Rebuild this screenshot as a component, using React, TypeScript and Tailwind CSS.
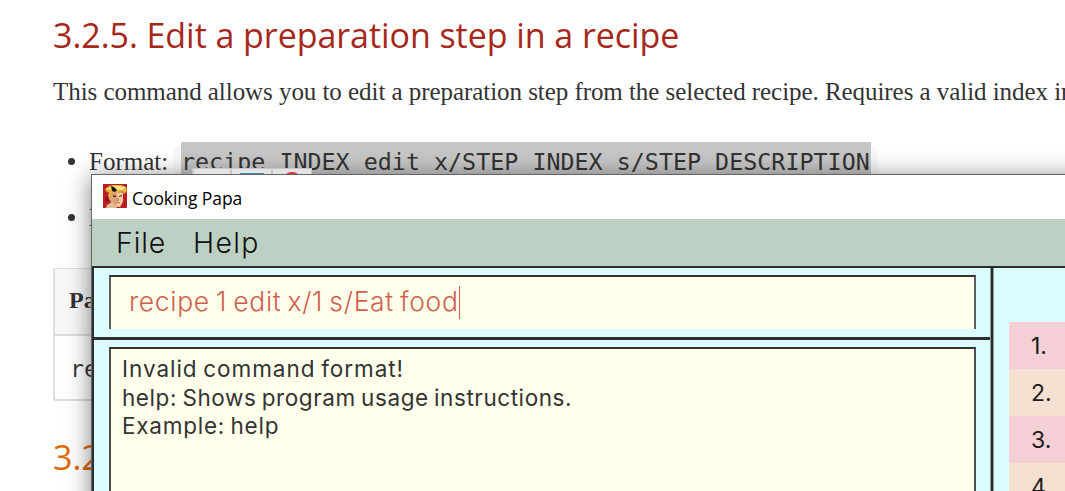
import React from "react";

function PapaIcon() {
  return (
    <svg width="24" height="24" viewBox="0 0 24 24" className="shrink-0">
      <rect width="24" height="24" fill="#bd1e25" />
      <path d="M2 14L5 12L7 17L3 17Z" fill="#8d1219" />
      <path d="M7 8L10 6L17 6L20 9L20 17L17 23L12 23L8 18L6 15L5 11Z" fill="#dfa377" />
      <path d="M14 9L20 9L20 17L17 23L13 22L15 16Z" fill="#f3cda0" />
      <path d="M2 5L6 2L10 1L18 1L23 3L24 7L21 10L19 7L10 8L8 13L6 12L6 9L3 7Z" fill="#e3b23b" />
      <path d="M3 5L9 2L18 2L23 4L19 6L11 6Z" fill="#f8e27c" />
      <path d="M8 2L11 3L14 6L12 8L9 7Z" fill="#1c120d" />
      <path d="M10 12L13 12.5M16 12.5L19 11.5" stroke="#5c2a1a" strokeWidth="1.3" fill="none" />
      <path d="M15 14L15.5 16.5L14 16.5M13 19L17 18.5" stroke="#a8613f" strokeWidth="0.8" fill="none" />
      <path d="M4 21L9 18L14 24L3 24Z" fill="#dcc09c" />
    </svg>
  );
}

function Document() {
  return (
    <article className="w-[1200px] pl-[53px] text-[#333] font-['Liberation_Serif',serif]">
      <h3 className="pt-[11px] h-[70px] font-['Open_Sans',sans-serif] text-[34px] leading-[48px] tracking-[-0.06px] text-[#a5281b] whitespace-nowrap">
        3.2.5. Edit a preparation step in a recipe
      </h3>
      <p className="h-[72px] pt-[6px] text-[25px] leading-[32px] tracking-[-0.055px] whitespace-nowrap">
        This command allows you to edit a preparation step from the selected recipe. Requires a valid index in the list.
      </p>
      <ul className="h-[126px] text-[25px]">
        <li className="flex h-[56px] items-start whitespace-nowrap">
          <span className="mt-[16px] ml-[15px] mr-[14px] h-[7px] w-[7px] rounded-full bg-[#333]" />
          <span className="leading-[39px] w-[85px]">Format:</span>
          <code className="flex rounded-md bg-[#f7f7f8] px-[7px] mt-[4px] font-['DejaVu_Sans_Mono',monospace] text-[23.3px] leading-[35px]">
            <span className="-mt-[4px] h-[39px] w-[690px] bg-[#c6c6c6] leading-[39px] tracking-[0.03px]">
              recipe INDEX edit x/STEP_INDEX s/STEP_DESCRIPTION
            </span>
          </code>
        </li>
        <li className="flex h-[56px] items-start">
          <span className="mt-[16px] ml-[15px] mr-[14px] h-[7px] w-[7px] rounded-full bg-[#333]" />
          <span className="leading-[39px]">Example:</span>
        </li>
      </ul>
      <div className="h-[133px] w-[900px] border-2 border-t border-[#dedede] text-[24px]">
        <div className="h-[67px] border-b-2 border-[#dedede] bg-[#f7f8f7] pl-[14px] font-bold leading-[63px]">Parameter</div>
        <div className="h-[63px] pl-[15px] font-['DejaVu_Sans_Mono',monospace] text-[23.3px] leading-[65px] text-black/80">recipe</div>
      </div>
      <h3 className="pt-[32px] font-['Open_Sans',sans-serif] text-[34px] leading-[48px] text-[#e0690c]">3.2.6.</h3>
    </article>
  );
}

const rows = [
  { n: "1.", cls: "bg-[#f4d0d6]" },
  { n: "2.", cls: "bg-[#f6e0d2]" },
  { n: "3.", cls: "bg-[#f4d0d6]" },
  { n: "4.", cls: "bg-[#f6e0d2]" },
];

function AppWindow() {
  return (
    <section className="absolute left-[91px] top-[174px] flex h-[400px] w-[1100px] flex-col border border-[#666] bg-white font-['Inter',sans-serif] shadow-[0_3px_22px_rgba(0,0,0,0.5)]">
      <header className="flex h-[44px] shrink-0 items-center pl-[11px] pb-[2px]">
        <PapaIcon />
        <span className="ml-[5px] mt-[4px] font-['Open_Sans',sans-serif] text-[17.5px] tracking-[-0.08px] text-black">Cooking Papa</span>
      </header>
      <nav className="flex h-[47px] shrink-0 bg-[#bcd0c4] pl-[24px] text-[28.5px] font-light leading-[47px] tracking-[1.3px] text-[#111]">
        <span className="w-[77px] tracking-[0.9px]">File</span>
        <span>Help</span>
      </nav>
      <main className="flex grow border-l-2 border-t-2 border-[#2b2f2f] bg-[#dcfcff]">
        <div className="flex w-[896px] flex-col">
          <div className="h-[69px] pl-[15px] pt-[7px]">
            <div className="flex h-[54px] w-[867px] items-center border-x-2 border-t-2 border-x-[#5a5f5d] border-t-[#333] bg-[#ffffec] pl-[18px] pb-[2px]">
              <span className="whitespace-nowrap text-[26.5px] font-light tracking-[0.68px] [word-spacing:-2px] text-[#d0604e]">recipe 1 edit x/1 s/Eat food</span>
              <span className="h-[33px] w-[1px] bg-[#d0604e]" />
            </div>
          </div>
          <div className="grow border-t-[3px] border-[#2b2f2f] pl-[15px] pt-[7px]">
            <div className="h-[200px] w-[867px] border-x-2 border-t-2 border-x-[#4a4f4d] border-t-[#333] bg-[#ffffec] pl-[11px] pt-[6px] text-[22.5px] leading-[28.5px] tracking-[0.57px] [word-spacing:-1.5px] text-[#333]">
              <p className="tracking-[0.95px]">Invalid command format!</p>
              <p>help: Shows program usage instructions.</p>
              <p className="tracking-[0.75px]">Example: help</p>
            </div>
          </div>
        </div>
        <div className="w-[4px] border-x border-[#8a9a9b] bg-[#2b2f2f]" />
        <div className="grow pl-[15px] pt-[54px]">
          {rows.map((r) => (
            <div key={r.n} className={`h-[47px] pl-[22px] text-[23px] leading-[49px] text-[#1b1b1b] ${r.cls}`}>
              {r.n}
            </div>
          ))}
        </div>
      </main>
    </section>
  );
}

export default function App() {
  return (
    <div className="relative h-[491px] w-[1065px] overflow-hidden bg-white">
      <Document />
      <AppWindow />
      <div className="absolute left-[192px] top-[168px] flex h-[6px] w-[120px] gap-[2px] overflow-hidden bg-[#c8c8c8] px-[2px] pt-[1px]">
        <i className="h-[8px] w-[36px] shrink-0 bg-[#e4e4e4]" />
        <i className="flex h-[8px] w-[39px] shrink-0 justify-center bg-[#e4e4e4] pt-[4px]"><b className="h-[4px] w-[24px] bg-[#3a88b8]" /></i>
        <i className="flex h-[8px] w-[38px] shrink-0 justify-center bg-[#e4e4e4] pt-[3px]"><b className="h-[20px] w-[20px] shrink-0 rounded-full bg-[#d83030]" /></i>
      </div>
    </div>
  );
}
